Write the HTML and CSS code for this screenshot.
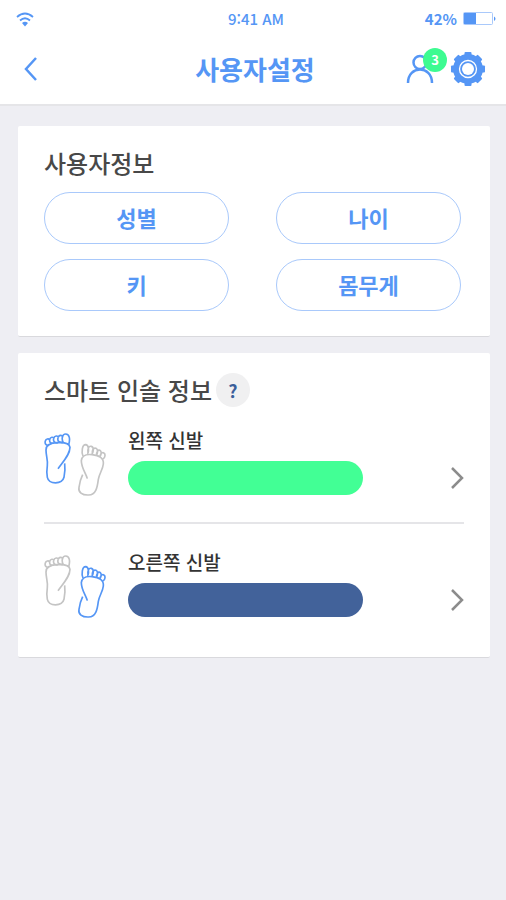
FILE: index.html
```html
<!DOCTYPE html>
<html lang="ko">
<head>
<meta charset="utf-8">
<meta name="viewport" content="width=device-width, initial-scale=1">
<title>사용자설정</title>
<link rel="stylesheet" href="styles.css">
</head>
<body>
<svg class="defs" aria-hidden="true">
  <symbol id="foot-left" viewBox="0 0 192 198">
    <g transform="translate(-10 -12)">
      <path d="M52 122C68 100 88 80 88 58C86 44 66 43 50 44C30 45 16 50 16 66C16 84 22 96 20 112C18 126 18 138 20 148C25 170 64 170 70 148C73 134 74 122 72 106"/>
      <path d="M68 44C62 34 64 18 75 18C87 18 89 34 84 50M66 43C54 44 50 38 52 30C54 20 66 20 66 28M52 44C42 46 37 40 39 32C41 22 52 22 53 29M39 45C30 48 26 42 27 35C29 26 38 26 40 32M22 52C15 52 12 46 14 39C16 32 24 31 27 36"/>
    </g>
  </symbol>
  <symbol id="foot-right" viewBox="0 0 192 198">
    <g transform="translate(92 24)">
      <path d="M38 116C34 100 20 84 20 62C22 46 34 42 52 44C74 46 88 54 86 72C84 90 74 100 71 118C68 142 64 164 42 165C22 166 10 156 13 142C15 128 18 116 24 104"/>
      <path d="M25 48C20 36 22 14 33 14C42 15 44 30 39 43M40 40C38 26 42 17 50 19C58 21 57 34 52 43M53 42C52 30 56 22 64 25C71 28 69 40 65 46M66 46C65 35 71 27 77 32C82 37 79 46 75 50M76 50C77 39 85 34 90 41C93 48 89 55 84 57"/>
    </g>
  </symbol>
</svg>

<header class="topbar">
  <div class="status">
    <svg class="wifi" viewBox="0 0 18 15" role="img" aria-label="Wi-Fi">
      <path d="M1 5Q9-2 17 5M4 8.500Q9 4 14 8.500" fill="none" stroke="currentColor" stroke-width="1.800"/>
      <path d="M6 11Q9 8.500 12 11L9 14.500Z" fill="currentColor"/>
    </svg>
    <span class="time">9:41 AM</span>
    <span class="power">42%
      <svg class="battery" viewBox="0 0 33 14" aria-hidden="true">
        <rect x=".5" y=".5" width="29" height="12" rx="1" fill="none" stroke="#a9c9fb"/>
        <rect x="1" y="1" width="12" height="11" fill="currentColor"/>
        <path d="M31 4.500Q34 6.500 31 9Z" fill="currentColor"/>
      </svg>
    </span>
  </div>
  <nav class="nav">
    <button class="icon-button" type="button" aria-label="뒤로">
      <svg class="back" viewBox="0 0 14 24"><path d="M12 1L2 12L12 23" stroke-width="2.500"/></svg>
    </button>
    <h1 class="title">사용자설정</h1>
    <div class="actions">
      <button class="icon-button" type="button" aria-label="알림">
        <svg class="person" viewBox="0 0 28 30" stroke-width="2.500">
          <circle cx="14" cy="8.500" r="6.500"/>
          <path d="M2 29C2 11 26 11 26 29"/>
        </svg>
        <span class="badge">3</span>
      </button>
      <button class="icon-button" type="button" aria-label="설정">
        <svg class="gear" viewBox="0 0 36 36">
          <circle cx="18" cy="18" r="15" fill="currentColor"/>
          <g fill="currentColor">
            <rect x="14.500" y="1" width="7" height="34" rx="1"/>
            <rect x="14.500" y="1" width="7" height="34" rx="1" transform="rotate(45 18 18)"/>
            <rect x="14.500" y="1" width="7" height="34" rx="1" transform="rotate(90 18 18)"/>
            <rect x="14.500" y="1" width="7" height="34" rx="1" transform="rotate(135 18 18)"/>
          </g>
          <circle cx="18" cy="18" r="8.500" fill="none" stroke="#fff" stroke-width="1.300"/>
          <circle cx="18" cy="18" r="6" fill="#fff"/>
        </svg>
      </button>
    </div>
  </nav>
</header>

<main class="content">
  <section class="card">
    <h2 class="heading">사용자정보</h2>
    <div class="fields">
      <button class="pill" type="button">성별</button>
      <button class="pill" type="button">나이</button>
      <button class="pill" type="button">키</button>
      <button class="pill" type="button">몸무게</button>
    </div>
  </section>

  <section class="card devices">
    <div class="heading-row">
      <h2 class="heading">스마트 인솔 정보</h2>
      <button class="help" type="button" aria-label="도움말">?</button>
    </div>
    <a class="insole" href="#left">
      <svg class="feet" viewBox="0 0 192 198" aria-hidden="true">
        <use class="active" href="#foot-left"/>
        <use class="idle" href="#foot-right"/>
      </svg>
      <span class="info">
        <span class="label">왼쪽 신발</span>
        <span class="bar bar-left"></span>
      </span>
      <svg class="chevron" viewBox="0 0 14 24" aria-hidden="true"><path d="M2 2L12 12L2 22" stroke-width="2.500"/></svg>
    </a>
    <a class="insole" href="#right">
      <svg class="feet" viewBox="0 0 192 198" aria-hidden="true">
        <use class="idle" href="#foot-left"/>
        <use class="active" href="#foot-right"/>
      </svg>
      <span class="info">
        <span class="label">오른쪽 신발</span>
        <span class="bar bar-right"></span>
      </span>
      <svg class="chevron" viewBox="0 0 14 24" aria-hidden="true"><path d="M2 2L12 12L2 22" stroke-width="2.500"/></svg>
    </a>
  </section>
</main>
</body>
</html>
```

FILE: styles.css
```css
* {
  box-sizing: border-box;
}

body {
  margin: 0;
  min-height: 100vh;
  background: #eeeef3;
  color: #484848;
  font-family: "Noto Sans CJK KR", "Noto Sans", sans-serif;
}

button {
  padding: 0;
  border: 0;
  background: none;
  color: inherit;
  font: inherit;
  cursor: pointer;
}

svg {
  display: block;
  flex: none;
}

h1,
h2 {
  margin: 0;
}

.defs {
  position: absolute;
  width: 0;
  height: 0;
}

.topbar {
  background: #fff;
  border-bottom: 2px solid #e5e5e8;
  color: #5596f5;
}

.status,
.nav {
  display: grid;
  grid-template-columns: 1fr auto 1fr;
  align-items: center;
}

.status {
  height: 38px;
  padding: 0 10px 0 16px;
  font-size: 15px;
  line-height: 20px;
}

.wifi {
  width: 18px;
  height: 15px;
}

.time {
  font-weight: 500;
}

.power {
  display: flex;
  justify-content: flex-end;
  align-items: center;
  gap: 6px;
  font-weight: 700;
}

.battery {
  width: 33px;
  height: 14px;
}

.nav {
  height: 66px;
  padding: 0 20px 4px 24px;
}

.icon-button {
  position: relative;
  justify-self: start;
}

.back {
  width: 14px;
  height: 24px;
}

.back,
.person,
.chevron {
  fill: none;
  stroke: currentColor;
}

.title {
  font-size: 26px;
  line-height: 36px;
  font-weight: 700;
}

.actions {
  display: flex;
  justify-content: flex-end;
  align-items: center;
  gap: 16px;
}

.person {
  width: 28px;
  height: 30px;
}

.badge {
  position: absolute;
  top: -6px;
  left: 17px;
  width: 24px;
  height: 24px;
  border-radius: 50%;
  background: #3dfb91;
  color: #fff;
  font-size: 13px;
  line-height: 24px;
  font-weight: 700;
  text-align: center;
}

.gear {
  width: 36px;
  height: 36px;
}

.content {
  display: grid;
  gap: 16px;
  padding: 20px 16px 20px 18px;
}

.card {
  padding: 20px 26px 25px;
  background: #fff;
  border-bottom: 1px solid #d9d9dd;
  border-radius: 2px;
}

.devices {
  padding-bottom: 13px;
}

.heading {
  font-size: 24px;
  line-height: 34px;
  font-weight: 500;
}

.fields {
  display: grid;
  grid-template-columns: 1fr 1fr;
  gap: 15px 47px;
  margin: 12px 3px 0 0;
}

.pill {
  height: 52px;
  padding-bottom: 3px;
  border: 1px solid #a9c9fb;
  border-radius: 26px;
  color: #5596f5;
  font-size: 22px;
  line-height: 32px;
  font-weight: 700;
}

.heading-row {
  display: flex;
  align-items: center;
  gap: 4px;
}

.help {
  width: 34px;
  height: 34px;
  border-radius: 50%;
  background: #f0f0f1;
  color: #3b5f9a;
  font-size: 18px;
  line-height: 34px;
  font-weight: 700;
}

.insole {
  display: flex;
  align-items: flex-start;
  padding: 30px 0 24px;
  color: #333;
  text-decoration: none;
}

.heading-row + .insole {
  padding-top: 25px;
  border-bottom: 2px solid #e5e5e8;
}

.feet {
  width: 64px;
  height: 66px;
  overflow: visible;
  fill: none;
  stroke-width: 5;
  stroke-linejoin: round;
}

.active {
  stroke: #5596f5;
}

.idle {
  stroke: #c4c4c4;
}

.info {
  flex: 1;
  padding-left: 20px;
}

.label {
  display: block;
  font-size: 19px;
  line-height: 16px;
  font-weight: 500;
}

.bar {
  display: block;
  width: 73%;
  height: 34px;
  margin-top: 13px;
  border-radius: 17px;
}

.bar-left {
  background: #42ff95;
}

.bar-right {
  background: #42629a;
}

.chevron {
  width: 14px;
  height: 24px;
  margin-top: 34px;
  color: #8c8c8c;
}
```
